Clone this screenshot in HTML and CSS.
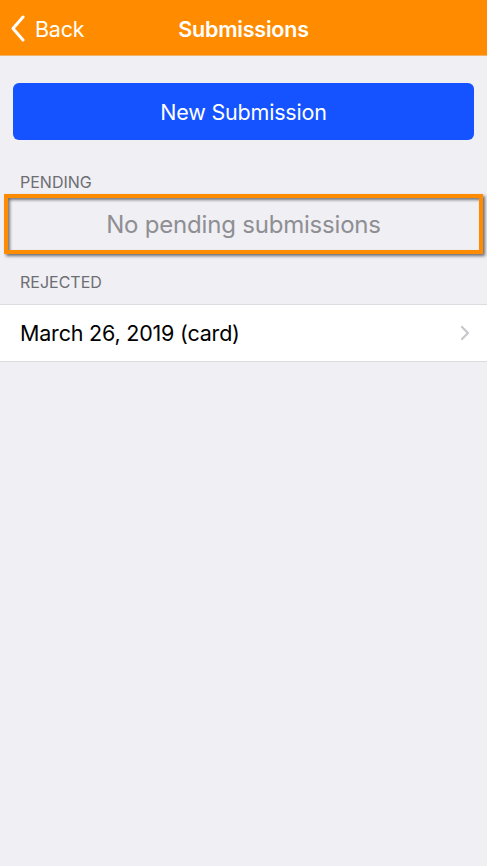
FILE: index.html
```html
<!DOCTYPE html>
<html>
<head>
<meta charset="utf-8">
<link rel="stylesheet" href="styles.css">
</head>
<body>
<header class="navbar">
  <div class="back">
    <svg class="back-icon" width="16" height="27" viewBox="0 0 16 27"><path d="M13 2 L3 13.5 L13 25" fill="none" stroke="#fff" stroke-width="3" stroke-linecap="round" stroke-linejoin="round"/></svg>
    <span>Back</span>
  </div>
  <div class="title">Submissions</div>
</header>
<main class="content">
  <div class="btn-wrap"><button class="new-btn">New Submission</button></div>
  <div class="section-label first">PENDING</div>
  <div class="highlight">
    <div class="empty">No pending submissions</div>
  </div>
  <div class="section-label">REJECTED</div>
  <div class="list">
    <div class="row">
      <span>March 26, 2019 (card)</span>
      <svg class="chev" width="10" height="16" viewBox="0 0 10 16"><path d="M2 2 L8 8 L2 14" fill="none" stroke="#c7c7cc" stroke-width="2.2" stroke-linecap="round" stroke-linejoin="round"/></svg>
    </div>
  </div>
</main>
</body>
</html>
```
FILE: styles.css
```css
html, body {
  margin: 0;
  padding: 0;
}
body {
  width: 487px;
  height: 866px;
  background: #efeff4;
  font-family: Inter, "Noto Sans", sans-serif;
  overflow: hidden;
}
.navbar {
  position: relative;
  height: 56px;
  background: #ff8c00;
  border-bottom: 1px solid #f4b36a;
  display: flex;
  align-items: center;
  justify-content: center;
  color: #fff;
  padding-top: 2px;
  box-sizing: border-box;
}
.back {
  position: absolute;
  left: 10px;
  top: 0;
  height: 57px;
  display: flex;
  align-items: center;
  gap: 9px;
  font-size: 21.5px;
  letter-spacing: -0.2px;
}
.back-icon {
  display: block;
}
.title {
  font-size: 21.5px;
  font-weight: 600;
  letter-spacing: -0.2px;
}
.content {
  display: flex;
  flex-direction: column;
}
.btn-wrap {
  padding: 27px 13px 0;
}
.new-btn {
  display: block;
  width: 100%;
  height: 57px;
  border: none;
  border-radius: 6px;
  background: #1453ff;
  color: #fff;
  font-family: inherit;
  font-size: 21.5px;
  letter-spacing: -0.2px;
}
.section-label {
  padding: 0 20px;
  font-size: 16px;
  color: #6d6d72;
  height: 20px;
  line-height: 20px;
  margin-top: 18px;
  margin-bottom: 0;
}
.section-label.first {
  margin-top: 32px;
}
.highlight {
  margin: 2px 4px 0 4px;
  height: 52px;
  border: 4px solid #ff8c00;
  box-shadow: 2px 2px 3px rgba(0, 0, 0, 0.55), inset 2px 2px 3px rgba(0, 0, 0, 0.5);
  display: flex;
  align-items: center;
  justify-content: center;
}
.empty {
  font-size: 24px;
  color: #8e8e93;
  letter-spacing: -0.2px;
}
.list {
  margin-top: 12px;
  background: #fff;
  border-top: 1px solid #dcdce0;
  border-bottom: 1px solid #dcdce0;
}
.row {
  height: 56px;
  display: flex;
  align-items: center;
  justify-content: space-between;
  padding: 0 20px;
  font-size: 21.5px;
  color: #000;
  letter-spacing: -0.2px;
}
.chev {
  display: block;
  margin-right: -3px;
}
```
